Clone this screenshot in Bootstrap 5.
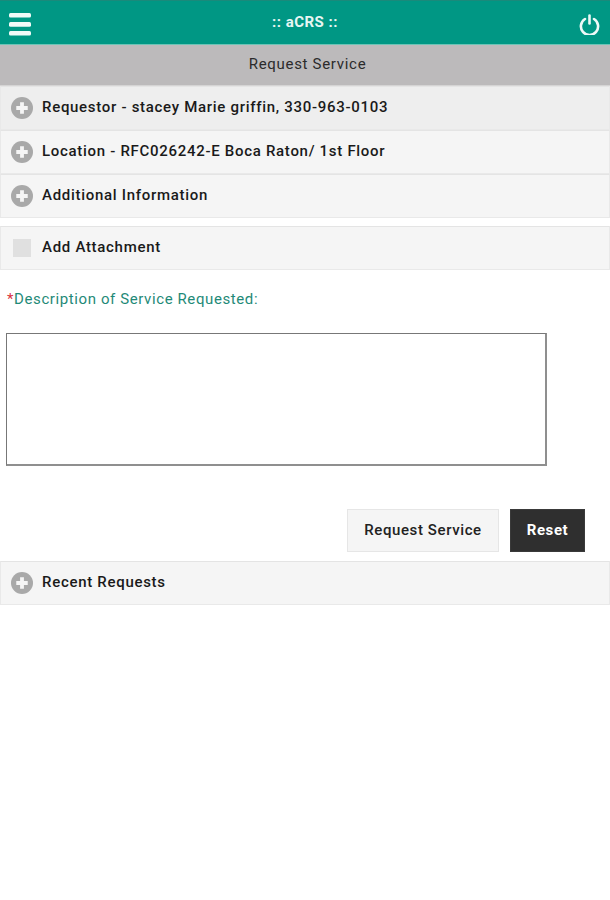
<!DOCTYPE html>
<html lang="en">
<head>
  <meta charset="UTF-8">
  <meta name="viewport" content="width=device-width, initial-scale=1.0">
  <title>aCRS - Request Service</title>
  <link href="https://cdn.jsdelivr.net/npm/bootstrap@5.3.3/dist/css/bootstrap.min.css" rel="stylesheet">
  <style>
    body {
      background-color: #fff;
      font-family: Roboto, "Liberation Sans", sans-serif;
      color: #222;
    }
    .top-bar {
      height: 45px;
      padding: 0 10px 0 9px;
      background-color: #009784;
      border-top: 1px solid #1a8a7b;
      border-bottom: 1px solid #6cc4b6;
      color: #e8f6f3;
      font-size: 15px;
      font-weight: 700;
      letter-spacing: .5px;
    }
    .top-bar svg {
      margin-top: 4px;
    }
    .sub-bar {
      height: 41px;
      padding: 0 0 2px 5px;
      background-color: #bcbabb;
      border-bottom: 1px solid #d5d4d4;
      font-size: 15px;
      letter-spacing: .7px;
      color: #2b2b2b;
    }
    .acc-row {
      height: 44px;
      padding: 0 0 1px 10px;
      background-color: #f5f5f5;
      border: 1px solid #e9e9e9;
      border-top-color: #e4e4e4;
      font-size: 15px;
      font-weight: 500;
      letter-spacing: .7px;
      color: #1a1a1a;
    }
    .acc-row span {
      padding-bottom: 1px;
    }
    .acc-row.is-first {
      background-color: #eeeeee;
    }
    .acc-list {
      margin-bottom: 8px;
    }
    .plus-icon {
      width: 22px;
      height: 22px;
      margin-right: 9px;
      flex-shrink: 0;
    }
    .check-box {
      width: 18px;
      height: 18px;
      margin-left: 2px;
      margin-right: 11px;
      background-color: #e0e0e0;
      flex-shrink: 0;
    }
    .desc-label {
      margin: 20px 0 24px 7px;
      height: 19px;
      line-height: 19px;
      font-size: 15px;
      letter-spacing: .6px;
      color: #1f8a78;
    }
    .desc-label span {
      color: #d9343f;
    }
    .desc-box {
      display: block;
      width: 541px;
      height: 133px;
      margin-left: 6px;
      border: 1px solid #555;
      border-right-width: 2px;
      border-bottom-width: 2px;
      border-color: #777 #8f8f8f #8f8f8f #777;
      border-radius: 0;
      resize: none;
    }
    .btn-area {
      margin-top: 43px;
      margin-bottom: 9px;
      padding-right: 25px;
      gap: 11px;
    }
    .btn-req, .btn-rst {
      height: 43px;
      border-radius: 0;
      font-size: 15px;
      font-weight: 500;
      letter-spacing: .6px;
      padding: 0;
    }
    .btn-req {
      width: 152px;
      background-color: #f5f5f5;
      border: 1px solid #e6e6e6;
      color: #222;
    }
    .btn-rst {
      width: 75px;
      background-color: #2f2f2f;
      border: 1px solid #3a3a3a;
      color: #fff;
      font-weight: 700;
    }
  </style>
</head>
<body>

  <div class="top-bar d-flex align-items-center justify-content-between">
    <svg width="22" height="23" viewBox="0 0 22 23" fill="#f2fbf9">
      <rect y="0" width="22" height="4.6" rx="1.5"/>
      <rect y="9" width="22" height="4.8" rx="1.5"/>
      <rect y="18" width="22" height="4.6" rx="1.5"/>
    </svg>
    <span>:: aCRS ::</span>
    <svg width="21" height="21" viewBox="0 0 21 21" fill="none" stroke="#eef9f7" stroke-width="2.6" stroke-linecap="round">
      <path d="M10.5 1.5v8"/>
      <path d="M6 5a8.6 8.6 0 1 0 9 0"/>
    </svg>
  </div>

  <div class="sub-bar d-flex align-items-center justify-content-center">Request Service</div>

  <div class="acc-list">
    <div class="acc-row is-first d-flex align-items-center">
      <svg class="plus-icon" viewBox="0 0 23 23"><circle cx="11.5" cy="11.5" r="11.5" fill="#a9a9a9"/><path d="M11.5 5.5v12M5.5 11.5h12" stroke="#f5f5f5" stroke-width="4"/></svg>
      <span>Requestor - stacey Marie griffin, 330-963-0103</span>
    </div>
    <div class="acc-row d-flex align-items-center">
      <svg class="plus-icon" viewBox="0 0 23 23"><circle cx="11.5" cy="11.5" r="11.5" fill="#a9a9a9"/><path d="M11.5 5.5v12M5.5 11.5h12" stroke="#f5f5f5" stroke-width="4"/></svg>
      <span>Location - RFC026242-E Boca Raton/ 1st Floor</span>
    </div>
    <div class="acc-row d-flex align-items-center">
      <svg class="plus-icon" viewBox="0 0 23 23"><circle cx="11.5" cy="11.5" r="11.5" fill="#a9a9a9"/><path d="M11.5 5.5v12M5.5 11.5h12" stroke="#f5f5f5" stroke-width="4"/></svg>
      <span>Additional Information</span>
    </div>
  </div>

  <div class="acc-row d-flex align-items-center">
    <div class="check-box"></div>
    <span>Add Attachment</span>
  </div>

  <div class="desc-label"><span>*</span>Description of Service Requested:</div>
  <textarea class="desc-box" aria-label="Description of Service Requested"></textarea>

  <div class="btn-area d-flex justify-content-end">
    <button type="button" class="btn btn-req">Request Service</button>
    <button type="button" class="btn btn-rst">Reset</button>
  </div>

  <div class="acc-row d-flex align-items-center">
    <svg class="plus-icon" viewBox="0 0 23 23"><circle cx="11.5" cy="11.5" r="11.5" fill="#a9a9a9"/><path d="M11.5 5.5v12M5.5 11.5h12" stroke="#f5f5f5" stroke-width="4"/></svg>
    <span>Recent Requests</span>
  </div>

  <script src="https://cdn.jsdelivr.net/npm/bootstrap@5.3.3/dist/js/bootstrap.bundle.min.js"></script>
</body>
</html>
